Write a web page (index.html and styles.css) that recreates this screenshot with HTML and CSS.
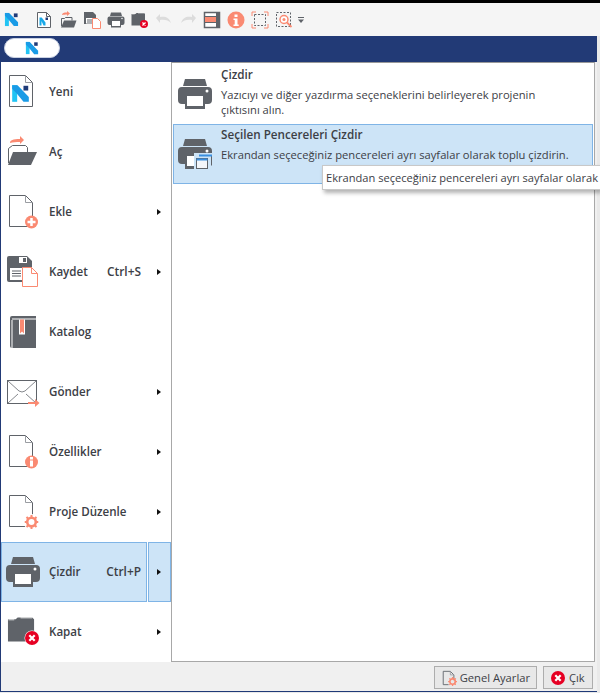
FILE: index.html
```html
<!DOCTYPE html>
<html lang="tr">
<head>
<meta charset="utf-8">
<title>Çizdir</title>
<link rel="stylesheet" href="styles.css">
</head>
<body>
<svg class="defs" width="0" height="0">
  <defs>
    <symbol id="logo" viewBox="0 0 16 16">
      <path d="M1 15V1h4.200v14z" fill="#22c4f4"/>
      <path d="M1 1h4.500L15 11v4h-4.500L5.200 8.500 1 4z" fill="#1a9be6"/>
      <rect x="10.500" y="1.500" width="4" height="4" fill="#1f3a78"/>
    </symbol>
    <symbol id="doc" viewBox="0 0 36 36">
      <path d="M4.500 1.500h16l7 7v24h-23z" fill="#fff" stroke="#5f6369" stroke-width="1"/>
      <path d="M20.500 1.500v7h7" fill="none" stroke="#9a9da2" stroke-width="1"/>
    </symbol>
    <symbol id="printer" viewBox="0 0 36 32">
      <path d="M8 1h20l2 7H6z" fill="#5f6369"/>
      <path d="M5 9h26a4 4 0 0 1 4 4v9a4 4 0 0 1-4 4h-3V31H8v-5H5a4 4 0 0 1-4-4v-9a4 4 0 0 1 4-4z" fill="#5f6369"/>
      <rect x="10" y="18" width="16" height="10" fill="#fff"/>
      <circle cx="30" cy="13" r="1.500" fill="#fff"/>
    </symbol>
    <symbol id="folder" viewBox="0 0 30 26">
      <path d="M1 3h8l2-2h15l2 2v23H1z" fill="#5f6369"/>
      <path d="M1.500 3.500h6M14 1.500h12" stroke="#fff" stroke-width=".8"/>
    </symbol>
    <symbol id="xcircle" viewBox="0 0 14 14">
      <circle cx="7" cy="7" r="7" fill="#e60023"/>
      <path d="M4.300 4.300l5.400 5.400M9.700 4.300l-5.400 5.400" stroke="#fff" stroke-width="2.200"/>
    </symbol>
    <symbol id="gear" viewBox="0 0 14 14">
      <circle cx="7" cy="7" r="4.300" fill="none" stroke="#fa8a72" stroke-width="2.600"/>
      <path d="M7 0v3M7 11v3M0 7h3M11 7h3M2 2l2.200 2.200M9.800 9.800L12 12M12 2L9.800 4.200M4.200 9.800L2 12" stroke="#fa8a72" stroke-width="2"/>
    </symbol>
  </defs>
</svg>

<div class="window">
  <div class="topline"></div>
  <div class="toolbar">
    <svg class="tb-logo"><use href="#logo"/></svg>
    <svg class="tb" viewBox="0 0 18 18"><path d="M2.500 1.500h9l4 4v11h-13z" fill="#fff" stroke="#5f6369"/><path d="M11.500 1.500v4h4" fill="none" stroke="#5f6369"/><path d="M4.500 14.500v-8h2.200l3.800 5v3h-2L6.500 10v4.500z" fill="#19a9e8"/><rect x="10.500" y="6.500" width="2.500" height="2.500" fill="#1f3a78"/></svg>
    <svg class="tb" viewBox="0 0 18 18"><path d="M3 4c0-2 2-2.500 5-2.500V0l3 2.500L8 5V3.600C6 3.600 5 4 3 4z" fill="#fa8a72"/><path d="M2.500 15V7.500h3l1-1h6.500v3" fill="none" stroke="#5f6369"/><path d="M5 9.500h12.500L15 16.500H2z" fill="#5f6369"/></svg>
    <svg class="tb" viewBox="0 0 18 18"><path d="M1 1h9l3 3v9H1z" fill="#5f6369"/><rect x="3" y="7" width="7" height="5.500" fill="#fff"/><rect x="4" y="8.500" width="5" height="1" fill="#5f6369"/><rect x="4" y="10.500" width="5" height="1" fill="#5f6369"/><path d="M9.500 7.500h5l3 3v7h-8z" fill="#fff" stroke="#fa8a72"/></svg>
    <svg class="tb" viewBox="0 0 18 16"><use href="#printer" width="18" height="16"/></svg>
    <svg class="tb" viewBox="0 0 18 18"><use href="#folder" width="15" height="14" y="1"/><use href="#xcircle" x="9" y="9" width="8" height="8"/></svg>
    <svg class="tb" viewBox="0 0 18 18"><path d="M1 7l4-4v3c5-1 9 0 11 6-3-3-6-3.500-11-3v3z" fill="#dcdcdc"/></svg>
    <svg class="tb" viewBox="0 0 18 18"><path d="M17 7l-4-4v3C8 5 4 6 2 12c3-3 6-3.500 11-3v3z" fill="#dcdcdc"/></svg>
    <svg class="tb" viewBox="0 0 18 18"><rect x="1.500" y="1.500" width="15" height="15" fill="#fff" stroke="#5f6369" stroke-width="1.500"/><rect x="2" y="6" width="11" height="5" fill="#fa8a72"/><rect x="13" y="2" width="3" height="14" fill="#5f6369"/><rect x="2" y="5" width="11" height="1" fill="#5f6369"/><rect x="2" y="11" width="11" height="1" fill="#5f6369"/></svg>
    <svg class="tb" viewBox="0 0 18 18"><circle cx="9" cy="9" r="8.500" fill="#fa8a72"/><rect x="7.500" y="3.500" width="3" height="2.500" fill="#fff"/><path d="M6.500 7.500h4v6h1.200v1.500H6.500v-1.500h1.200V9H6.500z" fill="#fff"/></svg>
    <svg class="tb" viewBox="0 0 18 18"><path d="M1 5V1h4M13 1h4v4M17 13v4h-4M5 17H1v-4" fill="none" stroke="#fa8a72"/><rect x="3.500" y="3.500" width="11" height="11" fill="none" stroke="#5f6369" stroke-dasharray="2 1.500"/></svg>
    <svg class="tb" viewBox="0 0 18 18"><rect x="1.500" y="1.500" width="14" height="14" fill="none" stroke="#5f6369" stroke-dasharray="2 1.500"/><circle cx="9" cy="8.500" r="4" fill="#fff" stroke="#fa8a72" stroke-width="1.500"/><circle cx="9" cy="8.500" r="1.500" fill="#fa8a72"/><path d="M12 11.500l4.500 4.500" stroke="#fa8a72" stroke-width="1.800"/></svg>
    <svg class="tb-more" viewBox="0 0 6 6"><rect y="0" width="6" height="1" fill="#5f6369"/><path d="M0 2.500h6L3 6z" fill="#5f6369"/></svg>
  </div>
  <div class="titlebar">
    <button class="pill"><svg class="pill-logo"><use href="#logo"/></svg></button>
  </div>
  <div class="main">
    <ul class="menu">
      <li class="item"><div class="item-main"><svg class="m-icon" viewBox="0 0 36 36"><use href="#doc" width="36" height="36"/><use href="#logo" x="6" y="10" width="19" height="19"/></svg><span class="label">Yeni</span></div><div class="item-arrow"></div></li>
      <li class="item"><div class="item-main"><svg class="m-icon" viewBox="0 0 36 36"><path d="M5 9c0-3 3-4 10-4V2l4 4-4 4V8C11 8 8 8 5 9z" fill="#fa8a72"/><path d="M3.500 29V14.500l4-3h13l2 2V18" fill="none" stroke="#5f6369"/><path d="M8 18h24l-6 13H3z" fill="#5f6369"/></svg><span class="label">Aç</span></div><div class="item-arrow"></div></li>
      <li class="item"><div class="item-main"><svg class="m-icon" viewBox="0 0 36 36"><use href="#doc" width="36" height="36"/><circle cx="26.500" cy="28" r="6.500" fill="#fa8a72"/><path d="M26.500 24v8M22.500 28h8" stroke="#fff" stroke-width="2.500"/></svg><span class="label">Ekle</span></div><div class="item-arrow"><i class="tri"></i></div></li>
      <li class="item"><div class="item-main"><svg class="m-icon" viewBox="0 0 36 36"><path d="M4 2h18l5 5v21H4a2 2 0 0 1-2-2V4a2 2 0 0 1 2-2z" fill="#5f6369"/><rect x="14" y="3" width="8" height="6" fill="#fff"/><rect x="18" y="4" width="3" height="4" fill="#5f6369"/><rect x="5" y="14" width="17" height="12" fill="#fff"/><path d="M7 17h9M7 19.500h9M7 22h9" stroke="#5f6369"/><path d="M17.500 13.500h9l6 6v13h-15z" fill="#fff" stroke="#fa8a72"/><path d="M26.500 13.500v6h6" fill="none" stroke="#fa8a72"/></svg><span class="label">Kaydet</span><span class="shortcut">Ctrl+S</span></div><div class="item-arrow"><i class="tri"></i></div></li>
      <li class="item"><div class="item-main"><svg class="m-icon" viewBox="0 0 36 36"><path d="M7 2h24v32H7a2 2 0 0 1-2-2V4a2 2 0 0 1 2-2z" fill="#5f6369"/><path d="M7 5h24" stroke="#fff"/><rect x="14" y="5.500" width="6" height="15" fill="#fff"/><path d="M15 5.500h4v14l-2-2-2 2z" fill="#fa8a72"/><path d="M7 6v28" stroke="#fff"/></svg><span class="label">Katalog</span></div><div class="item-arrow"></div></li>
      <li class="item"><div class="item-main"><svg class="m-icon" viewBox="0 0 36 36"><rect x="2.500" y="6.500" width="29" height="23" fill="#fff" stroke="#5f6369"/><path d="M3 7l11 10q3 2 6 0L31 7M3 29l10-9M31 29l-10-9" fill="none" stroke="#85888d"/><path d="M23 28h7v-3l4.500 4-4.500 4v-3h-7z" fill="#fa8a72"/></svg><span class="label">Gönder</span></div><div class="item-arrow"><i class="tri"></i></div></li>
      <li class="item"><div class="item-main"><svg class="m-icon" viewBox="0 0 36 36"><use href="#doc" width="36" height="36"/><circle cx="26.500" cy="28" r="6.500" fill="#fa8a72"/><rect x="25" y="23" width="3" height="2.500" fill="#fff"/><rect x="25" y="26.500" width="3" height="6" fill="#fff"/></svg><span class="label">Özellikler</span></div><div class="item-arrow"><i class="tri"></i></div></li>
      <li class="item"><div class="item-main"><svg class="m-icon" viewBox="0 0 36 36"><use href="#doc" width="36" height="36"/><circle cx="26.500" cy="28" r="8" fill="#fff"/><use href="#gear" x="19.500" y="21" width="14" height="14"/></svg><span class="label">Proje Düzenle</span></div><div class="item-arrow"><i class="tri"></i></div></li>
      <li class="item is-active"><div class="item-main"><svg class="m-icon" viewBox="0 0 36 36"><use href="#printer" x="0" y="2" width="36" height="32"/></svg><span class="label">Çizdir</span><span class="shortcut">Ctrl+P</span></div><div class="item-arrow"><i class="tri"></i></div></li>
      <li class="item"><div class="item-main"><svg class="m-icon" viewBox="0 0 36 36"><use href="#folder" x="2" y="2" width="29" height="26"/><circle cx="27" cy="24" r="7.500" fill="#fff"/><use href="#xcircle" x="20" y="17" width="14" height="14"/></svg><span class="label">Kapat</span></div><div class="item-arrow"><i class="tri"></i></div></li>
    </ul>
    <div class="panel">
      <div class="entry">
        <svg class="e-icon"><use href="#printer"/></svg>
        <div class="e-text">
          <div class="e-title">Çizdir</div>
          <div class="e-desc">Yazıcıyı ve diğer yazdırma seçeneklerini belirleyerek projenin çıktısını alın.</div>
        </div>
      </div>
      <div class="entry is-active">
        <svg class="e-icon" viewBox="0 0 36 32"><use href="#printer" width="36" height="32"/><rect x="17" y="15" width="19" height="17" fill="#cde4f7"/><path d="M22.500 17.500h12v10" fill="none" stroke="#5f6369"/><rect x="22" y="16.500" width="13" height="2" fill="#3b8fe0"/><rect x="19.500" y="20.500" width="11" height="10" fill="#f3f6fa" stroke="#5f6369"/><rect x="19.500" y="20.500" width="11" height="2" fill="#3b8fe0"/></svg>
        <div class="e-text">
          <div class="e-title">Seçilen Pencereleri Çizdir</div>
          <div class="e-desc">Ekrandan seçeceğiniz pencereleri ayrı sayfalar olarak toplu çizdirin.</div>
        </div>
      </div>
    </div>
    <div class="tooltip">Ekrandan seçeceğiniz pencereleri ayrı sayfalar olarak</div>
  </div>
  <div class="footer">
    <button class="btn"><svg class="btn-icon" viewBox="0 0 18 18"><path d="M2.500 1.500h8l4 4v6M2.500 1.500v15h6" fill="none" stroke="#5f6369"/><path d="M10.500 1.500v4h4" fill="none" stroke="#9a9da2"/><use href="#gear" x="8" y="8" width="10" height="10"/></svg>Genel Ayarlar</button>
    <button class="btn btn-exit"><svg class="btn-icon-sm" viewBox="0 0 14 14"><use href="#xcircle" width="14" height="14"/></svg>Çık</button>
  </div>
</div>
</body>
</html>
```
FILE: styles.css
```css
* { box-sizing: border-box; }
html, body { margin: 0; padding: 0; height: 100%; }
body {
  background: #e9e9e9;
  overflow: hidden;
  font-family: "Open Sans", "Liberation Sans", sans-serif;
  color: #3c4046;
}
.defs { position: absolute; }
.window {
  width: 597px;
  height: 692px;
  display: flex;
  flex-direction: column;
  background: #f0f0f0;
  border-bottom: 1px solid #1f3a78;
}
.topline { height: 3px; background: #000; flex: none; margin-right: -3px; }
.toolbar {
  height: 33px;
  flex: none;
  margin-right: -3px;
  background: #f5f5f5;
  display: flex;
  align-items: center;
  gap: 6px;
  padding-left: 4px;
}
.tb-logo { width: 15px; height: 15px; margin-right: 10px; }
.tb { width: 18px; height: 18px; flex: none; }
.tb-more { width: 6px; height: 6px; margin-left: -1px; }
.titlebar {
  height: 26px;
  flex: none;
  background: #223a76;
  padding: 2px 0 0 4px;
}
.pill {
  display: flex;
  align-items: center;
  justify-content: center;
  width: 56px;
  height: 20px;
  padding: 0;
  border: 1px solid #c9d1e2;
  border-radius: 10px;
  background: #fff;
}
.pill-logo { width: 14px; height: 14px; }
.main {
  flex: 1;
  position: relative;
  display: flex;
  align-items: flex-start;
  background: #f0f0f0;
  border-left: 1px solid #223a76;
  min-height: 0;
}
.menu {
  list-style: none;
  margin: 0;
  padding: 0;
  width: 170px;
  flex: none;
  background: #fff;
}
.item { height: 60px; display: flex; gap: 1px; }
.item-main {
  flex: 1;
  min-width: 0;
  display: flex;
  align-items: center;
  padding: 0 5px 0 3px;
  border: 1px solid transparent;
}
.item-arrow {
  width: 23px;
  flex: none;
  display: flex;
  align-items: center;
  justify-content: center;
  padding-right: 2px;
  border: 1px solid transparent;
}
.item.is-active .item-main,
.item.is-active .item-arrow {
  background: #cde4f7;
  border-color: #7fb4e6;
}
.m-icon { width: 36px; height: 36px; flex: none; margin-right: 8px; }
.label {
  flex: 1;
  padding-bottom: 2px;
  font-size: 11.6px;
  font-weight: 600;
  white-space: nowrap;
}
.shortcut {
  padding-bottom: 2px;
  font-size: 11.9px;
  font-weight: 600;
  white-space: nowrap;
}
.tri {
  width: 0;
  height: 0;
  border-left: 4px solid #111;
  border-top: 3px solid transparent;
  border-bottom: 3px solid transparent;
}
.panel {
  width: 424px;
  height: 600px;
  flex: none;
  background: #fff;
  border: 1px solid #a8a8a8;
  border-top-color: #999;
  padding: 1px 1px 0;
}
.entry {
  height: 60px;
  display: flex;
  border: 1px solid transparent;
  padding: 2px 0 0 3px;
}
.entry.is-active { background: #cde4f7; border-color: #7fb4e6; }
.e-icon { width: 36px; height: 32px; flex: none; margin: 11px 8px 0 0; }
.e-text { flex: 1; min-width: 0; }
.e-title { font-size: 11.7px; font-weight: 600; line-height: 15px; margin-bottom: 5px; }
.e-desc { font-size: 11.2px; line-height: 15px; width: 330px; white-space: normal; }
.entry.is-active .e-desc { width: auto; white-space: nowrap; }
.tooltip {
  position: absolute;
  left: 321px;
  top: 103px;
  width: 278px;
  height: 25px;
  background: #fff;
  border: 1px solid #c8c8c8;
  border-right: 0;
  box-shadow: 2px 3px 4px rgba(0, 0, 0, .3);
  padding: 4px 0 0 3px;
  font-size: 11.1px;
  line-height: 16px;
  white-space: nowrap;
}
.footer {
  height: 29px;
  flex: none;
  display: flex;
  justify-content: flex-end;
  align-items: flex-start;
  gap: 6px;
  padding: 4px 4px 0 0;
  background: #f0f0f0;
  border-left: 1px solid #223a76;
}
.btn {
  height: 23px;
  display: flex;
  align-items: center;
  gap: 3px;
  padding: 0 6px;
  background: #e8e8e8;
  border: 1px solid #adadad;
  font-family: inherit;
  font-size: 11.2px;
  color: #3c4046;
}
.btn-exit { width: 50px; padding: 0 0 0 7px; gap: 4px; }
.btn-icon { width: 16px; height: 16px; flex: none; }
.btn-icon-sm { width: 14px; height: 14px; flex: none; }
```
